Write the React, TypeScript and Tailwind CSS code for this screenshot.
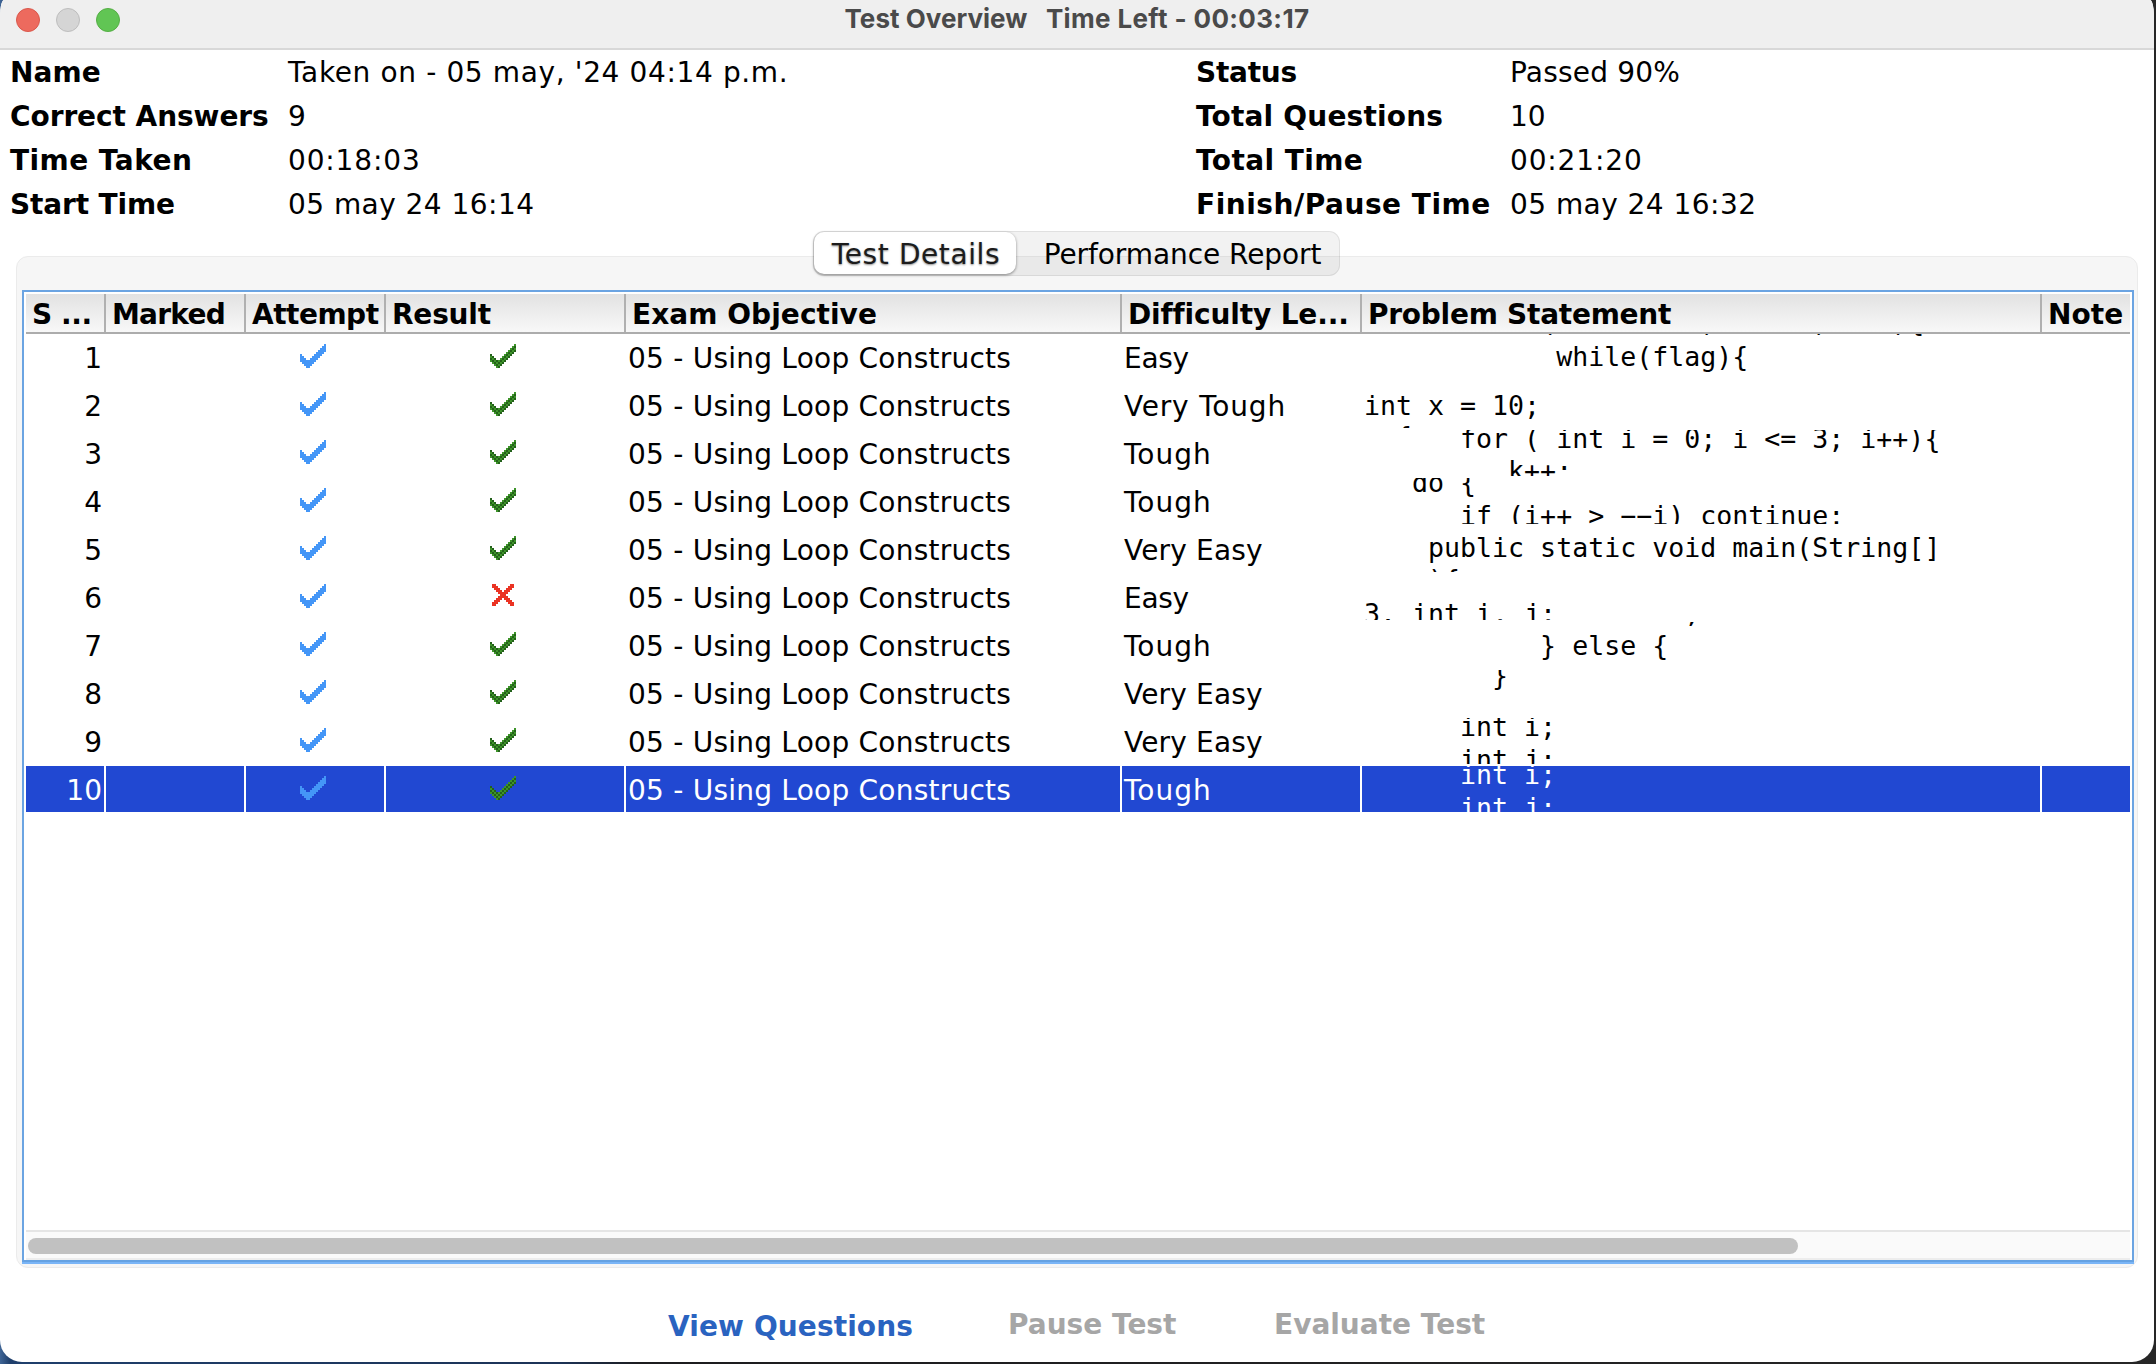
type Row = {
  difficulty: string;
  tracking: string;
  correct: boolean;
  shift: string;
  code: string;
};

const rows: Row[] = [
  { difficulty: "Easy", tracking: "-tracking-[0.3px]", correct: true, shift: "-mt-[30px] leading-[35px]", code: "        for(int i = 0; i < 5; i++){\n            while(flag){" },
  { difficulty: "Very Tough", tracking: "tracking-[0.8px]", correct: true, shift: "mt-[8px] leading-[31px]", code: "int x = 10;\n  {" },
  { difficulty: "Tough", tracking: "tracking-[1px]", correct: true, shift: "-mt-[7px] leading-[32px]", code: "      for ( int i = 0; i <= 3; i++){\n         k++;" },
  { difficulty: "Tough", tracking: "tracking-[1px]", correct: true, shift: "-mt-[12px] leading-[33px]", code: "   do {\n      if (i++ > −−i) continue;" },
  { difficulty: "Very Easy", tracking: "tracking-[0.17px]", correct: true, shift: "mt-[6px] leading-[32px]", code: "    public static void main(String[]\nargs){" },
  { difficulty: "Easy", tracking: "-tracking-[0.3px]", correct: false, shift: "mt-[23px] leading-[33px]", code: "3. int i, j;" },
  { difficulty: "Tough", tracking: "tracking-[1px]", correct: true, shift: "-mt-[26px] leading-[33px]", code: "               break;\n           } else {" },
  { difficulty: "Very Easy", tracking: "tracking-[0.17px]", correct: true, shift: "-mt-[11px] leading-[33px]", code: "        }" },
  { difficulty: "Very Easy", tracking: "tracking-[0.17px]", correct: true, shift: "-mt-[8px] leading-[33px]", code: "      int i;\n      int j;" },
  { difficulty: "Tough", tracking: "tracking-[1px]", correct: true, shift: "-mt-[8px] leading-[33px]", code: "      int i;\n      int j;" },
];

// Column widths, each including its 2px separator.
const columns = "grid grid-cols-[80px_140px_140px_240px_496px_240px_680px_88px]";

const headings: [string, string][] = [
  ["S ...", "tracking-[-0.4px]"],
  ["Marked", "tracking-[-0.75px]"],
  ["Attempt", "tracking-[-0.5px]"],
  ["Result", "tracking-[-0.2px]"],
  ["Exam Objective", "tracking-[0.05px]"],
  ["Difficulty Le...", "tracking-[-0.15px]"],
  ["Problem Statement", "tracking-[-0.25px]"],
  ["Note", "tracking-[0.1px]"],
];

const checkTops = [5, 6, 7, 8, 8, 7, 6, 5, 4, 3, 2, 1, 0];

function Check({ dark, light }: { dark: string; light: string }) {
  return (
    <svg width="26" height="24" viewBox="0 0 13 12" shapeRendering="crispEdges">
      {checkTops.flatMap((top, x) =>
        [0, 1, 2, 3].map((d) => (
          <rect key={`${x}-${d}`} x={x} y={top + d} width="1" height="1" fill={(x + top + d) % 2 ? dark : light} />
        )),
      )}
    </svg>
  );
}

function Cross() {
  const cells: [number, number][] = [];
  for (let y = 0; y < 11; y++) {
    for (let x = 0; x < 11; x++) {
      if (Math.abs(x - y) <= 1 || Math.abs(x + y - 10) <= 1) cells.push([x, y]);
    }
  }
  return (
    <svg width="22" height="22" viewBox="0 0 11 11" shapeRendering="crispEdges">
      {cells.map(([x, y]) => (
        <rect key={`${x}-${y}`} x={x} y={y} width="1" height="1" fill="#ea3323" />
      ))}
    </svg>
  );
}

type Info = { label: string; labelTracking: string; value: string; valueTracking: string };

const leftInfo: Info[] = [
  { label: "Name", labelTracking: "tracking-[0.1px]", value: "Taken on - 05 may, '24 04:14 p.m.", valueTracking: "tracking-[0.63px]" },
  { label: "Correct Answers", labelTracking: "tracking-[-0.07px]", value: "9", valueTracking: "" },
  { label: "Time Taken", labelTracking: "tracking-[0.45px]", value: "00:18:03", valueTracking: "tracking-[0.85px]" },
  { label: "Start Time", labelTracking: "tracking-[-0.15px]", value: "05 may 24 16:14", valueTracking: "tracking-[0.45px]" },
];

const rightInfo: Info[] = [
  { label: "Status", labelTracking: "tracking-[-0.25px]", value: "Passed 90%", valueTracking: "tracking-[0.2px]" },
  { label: "Total Questions", labelTracking: "tracking-[0.18px]", value: "10", valueTracking: "" },
  { label: "Total Time", labelTracking: "tracking-[0.4px]", value: "00:21:20", valueTracking: "tracking-[0.85px]" },
  { label: "Finish/Pause Time", labelTracking: "tracking-[0.52px]", value: "05 may 24 16:32", valueTracking: "tracking-[0.45px]" },
];

function InfoList({ items, cols }: { items: Info[]; cols: string }) {
  return (
    <dl className={`grid ${cols} auto-rows-[44px] leading-[44px]`}>
      {items.map((item) => (
        <div key={item.label} className="contents">
          <dt className={`font-bold ${item.labelTracking}`}>{item.label}</dt>
          <dd className={item.valueTracking}>{item.value}</dd>
        </div>
      ))}
    </dl>
  );
}

export default function App() {
  return (
    <div className="h-[1364px] w-[2156px] overflow-hidden bg-[linear-gradient(90deg,#3f6596_0,#1f3f6c_10px,#1c3357_560px,#1c1c1e_640px,#262626_100%)] pr-[2px] pb-[2px] font-['DejaVu_Sans',sans-serif] text-[28px] whitespace-nowrap text-black">
      <div className="flex h-full flex-col overflow-hidden rounded-t-[4px_16px] rounded-b-[22px] bg-white">
        <header className="grid h-[50px] shrink-0 grid-cols-[1fr_auto_1fr] items-start border-b-2 border-[#d8d8d8] bg-[#efefef]">
          <div className="flex gap-4 pt-2 pl-4">
            <span className="size-6 rounded-full border border-[#d9584c] bg-[#ed6a5e]" />
            <span className="size-6 rounded-full border border-[#bdbdbd] bg-[#d5d5d5]" />
            <span className="size-6 rounded-full border border-[#55ae45] bg-[#61c554]" />
          </div>
          <h1 className="font-['Inter',sans-serif] text-[26px] leading-[38px] font-bold tracking-[0.36px] whitespace-pre text-[#4a4a4a]">
            <span className="tracking-[0.02px]">{"Test Overview   "}</span>
            {"Time Left - 00:03:17"}
          </h1>
        </header>

        <section className="flex shrink-0 pt-[1px]">
          <div className="w-[1186px] pl-[10px]">
            <InfoList cols="grid-cols-[278px_1fr]" items={leftInfo} />
          </div>
          <div className="pl-[10px]">
            <InfoList cols="grid-cols-[314px_1fr]" items={rightInfo} />
          </div>
        </section>

        <main className="relative mt-[29px] ml-4 h-[1012px] w-[2122px] shrink-0 rounded-[12px] border border-[#ebebeb] bg-[#f6f6f6] pt-[33px] pl-[5px]">
          <nav className="absolute -top-[26px] left-[796px] flex h-[45px] w-[527px] rounded-[11px] border border-black/8 bg-black/5">
            <button className="h-[42px] w-[202px] rounded-[10px] bg-white pl-[2px] leading-[45px] tracking-[0.6px] text-[#1c1c1c] shadow-[0_1px_3px_rgba(0,0,0,0.45)] [text-shadow:0_1px_2px_rgba(0,0,0,0.45)]">
              Test Details
            </button>
            <button className="flex-1 pt-[2px] pl-[10px] leading-[42px] tracking-[-0.08px]">Performance Report</button>
          </nav>

          <div className="flex h-[974px] w-[2112px] flex-col border-2 border-b-0 border-[#6ba4e2] bg-white">
            <div className="min-h-0 flex-1 overflow-hidden p-[2px] pb-0">
              <div className={`${columns} h-10 w-[2104px] overflow-hidden border-b-2 border-[#acacac] bg-linear-to-b from-[#e2e2e2] to-[#f8f8f8] leading-[41px] font-bold`}>
                {headings.map(([label, tracking]) => (
                  <div key={label} className={`overflow-hidden border-r-2 border-[#b0b0b0] pl-[6px] last:border-r-0 ${tracking}`}>
                    {label}
                  </div>
                ))}
              </div>
              {rows.map((row, i) => {
                const selected = i === rows.length - 1;
                return (
                  <div
                    key={i}
                    className={`${columns} mb-[2px] h-[46px] w-[2104px] overflow-hidden leading-[49px] *:border-r-2 *:border-white *:last:border-r-0 ${selected ? "bg-[#2148d2] text-white" : ""}`}
                  >
                    <div className="pr-[2px] text-right">{i + 1}</div>
                    <div />
                    <div className="pt-[10px] pl-[54px]">
                      <Check dark="#4496f7" light="#4496f7" />
                    </div>
                    <div className={row.correct ? "pt-[10px] pl-[104px]" : "pt-[10px] pl-[106px]"}>
                      {row.correct ? <Check dark="#23611a" light="#3d9429" /> : <Cross />}
                    </div>
                    <div className="pl-[2px] tracking-[0.23px]">05 - Using Loop Constructs</div>
                    <div className={`pl-[2px] ${row.tracking}`}>{row.difficulty}</div>
                    <div className="h-[46px] overflow-hidden pl-[2px]">
                      <pre className={`font-['DejaVu_Sans_Mono',monospace] text-[26.6px] ${row.shift}`}>{row.code}</pre>
                    </div>
                    <div />
                  </div>
                );
              })}
            </div>
            <div className="mx-[2px] h-[30px] w-[2104px] shrink-0 border-t-2 border-b-2 border-t-[#e5e5e5] border-b-[#ededed] bg-[#fafafa] pt-[6px] pl-[2px]">
              <div className="h-4 w-[1770px] rounded-full bg-[#c1c1c1]" />
            </div>
            <div className="-mx-[2px] h-1 shrink-0 border-t-2 border-[#66a2e2] bg-[#7ab5f7]" />
          </div>
        </main>

        <footer className="flex items-start pt-[34px] pl-[668px] font-bold leading-[46px]">
          <button className="w-[340px] pt-[2px] text-left tracking-[0.1px] text-[#2a63c0]">View Questions</button>
          <button className="w-[266px] text-left text-[#a6a6a6]">Pause Test</button>
          <button className="text-left text-[#a6a6a6]">Evaluate Test</button>
        </footer>
      </div>
    </div>
  );
}
